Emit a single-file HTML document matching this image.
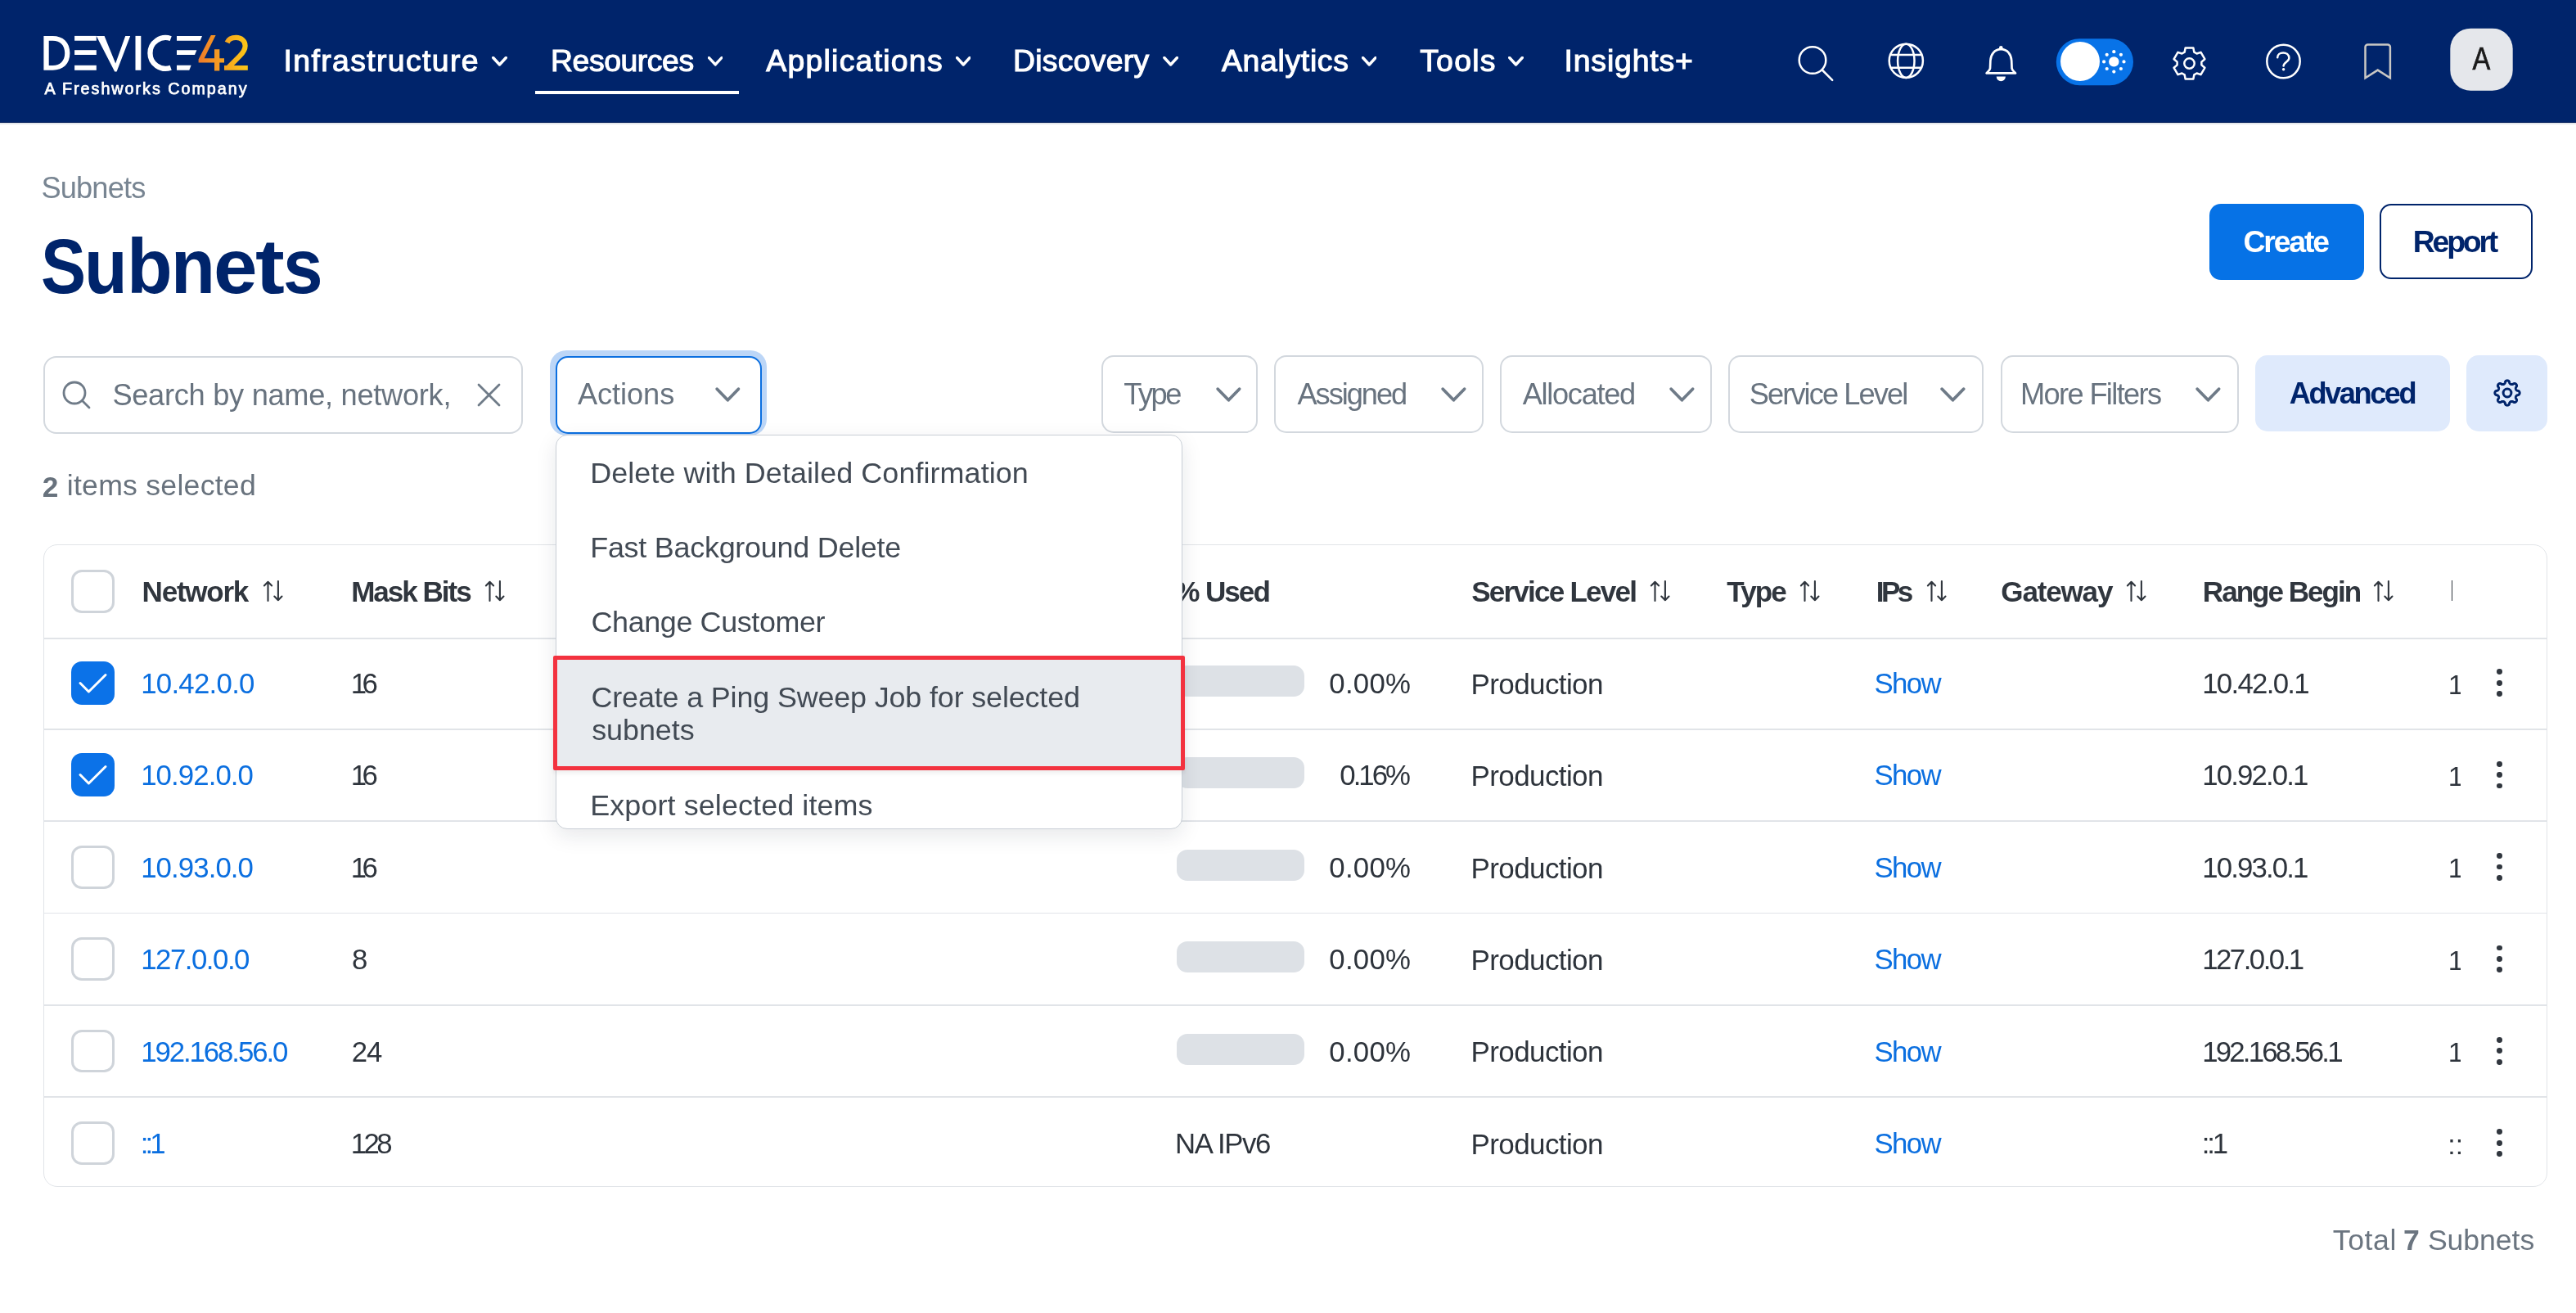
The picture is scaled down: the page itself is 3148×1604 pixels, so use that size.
<!DOCTYPE html><html><head><meta charset="utf-8"><style>
html,body{margin:0;padding:0;width:3148px;height:1604px;overflow:hidden;background:#fff;position:relative}
.t{position:absolute;line-height:1;white-space:nowrap;font-family:"Liberation Sans",sans-serif}
</style></head><body><div id="root" style="position:absolute;left:0;top:0;width:3148px;height:1604px;will-change:transform">
<div style="position:absolute;left:0;top:0;width:3148px;height:150px;background:#00246b"></div>
<div style="position:absolute;left:0;top:149px;width:3148px;height:1px;background:#001a58"></div>
<div style="position:absolute;left:0;top:150px;width:3148px;height:2px;background:#e3e7eb"></div>
<svg style="position:absolute;left:0;top:0" width="320" height="130" viewBox="0 0 320 130">
<defs><linearGradient id="g42" x1="242" y1="0" x2="303" y2="0" gradientUnits="userSpaceOnUse"><stop offset="0" stop-color="#ef7a2a"/><stop offset="1" stop-color="#fdc816"/></linearGradient></defs>
<g fill="#fff">
<path fill-rule="evenodd" d="M53.4,43.9 H64.5 C77,43.9 85.4,51.5 85.4,64.85 C85.4,78.2 77,85.8 64.5,85.8 H53.4 Z M59.7,49.7 H64.5 C73.5,49.7 79.2,55 79.2,64.85 C79.2,74.7 73.5,80 64.5,80 H59.7 Z"/>
<rect x="91.1" y="43.9" width="26.7" height="5.8"/><rect x="91.1" y="61.2" width="26.7" height="5.8"/><rect x="91.1" y="79.8" width="26.7" height="6"/>
<polygon points="117.8,43.9 127.6,43.9 141.2,77.5 153.2,43.9 159.2,43.9 142.6,87.4 140.2,87.4"/>
<rect x="165.5" y="43.9" width="6.8" height="41.9"/>
<polygon points="216,43.9 247,43.9 244.6,49.7 216,49.7"/><polygon points="216,61.2 240.4,61.2 238,67 216,67"/><polygon points="216,79.8 233.6,79.8 231.3,85.8 216,85.8"/>
</g>
<path d="M208.7,47.1 A18.9,18.9 0 1 0 208.7,82.7" fill="none" stroke="#fff" stroke-width="6.3"/>
<g fill="url(#g42)">
<polygon points="257.8,42.9 263.6,42.9 249.6,71.2 262,71.2 262,60.2 268.3,60.2 268.3,71.2 274,71.2 274,76.4 268.3,76.4 268.3,86.4 262,86.4 262,76.4 242.6,76.4 242.6,72.5"/>
<path d="M277.6,52 C279.4,47.5 283.2,45.9 288.5,45.9 C295,45.9 299.6,50 299.6,56 C299.6,61 297.2,64.2 293,68.4 L278.5,83" fill="none" stroke="url(#g42)" stroke-width="6.2"/>
<rect x="274" y="80" width="28.8" height="5.8"/>
</g>
</svg>
<div class="t" style="left:54.5px;top:98.5px;font-size:19.71px;color:#fff;letter-spacing:2.00px;-webkit-text-stroke:0.75px #fff;">A Freshworks Company</div>
<div class="t" style="left:346.5px;top:56.4px;font-size:37.39px;color:#fff;letter-spacing:1.37px;-webkit-text-stroke:1.1px #fff;">Infrastructure</div>
<svg style="position:absolute;left:601.0px;top:69.4px" width="19.0" height="12.5" viewBox="0 0 18.6 12.5"><path d="M1.5,1.5 L9.3,10 L17.1,1.5" fill="none" stroke="#fff" stroke-width="3.4" stroke-linecap="round" stroke-linejoin="round"/></svg>
<div class="t" style="left:673.0px;top:56.4px;font-size:37.39px;color:#fff;letter-spacing:-0.44px;-webkit-text-stroke:1.1px #fff;">Resources</div>
<svg style="position:absolute;left:864.6px;top:69.4px" width="18.4" height="12.5" viewBox="0 0 18.6 12.5"><path d="M1.5,1.5 L9.3,10 L17.1,1.5" fill="none" stroke="#fff" stroke-width="3.4" stroke-linecap="round" stroke-linejoin="round"/></svg>
<div class="t" style="left:936.3px;top:56.4px;font-size:37.39px;color:#fff;letter-spacing:1.25px;-webkit-text-stroke:1.1px #fff;">Applications</div>
<svg style="position:absolute;left:1167.8px;top:69.4px" width="18.6" height="12.5" viewBox="0 0 18.6 12.5"><path d="M1.5,1.5 L9.3,10 L17.1,1.5" fill="none" stroke="#fff" stroke-width="3.4" stroke-linecap="round" stroke-linejoin="round"/></svg>
<div class="t" style="left:1238.0px;top:56.4px;font-size:37.39px;color:#fff;letter-spacing:0.25px;-webkit-text-stroke:1.1px #fff;">Discovery</div>
<svg style="position:absolute;left:1420.7px;top:69.4px" width="19.3" height="12.5" viewBox="0 0 18.6 12.5"><path d="M1.5,1.5 L9.3,10 L17.1,1.5" fill="none" stroke="#fff" stroke-width="3.4" stroke-linecap="round" stroke-linejoin="round"/></svg>
<div class="t" style="left:1493.0px;top:56.4px;font-size:37.39px;color:#fff;letter-spacing:0.67px;-webkit-text-stroke:1.1px #fff;">Analytics</div>
<svg style="position:absolute;left:1663.9px;top:69.4px" width="18.6" height="12.5" viewBox="0 0 18.6 12.5"><path d="M1.5,1.5 L9.3,10 L17.1,1.5" fill="none" stroke="#fff" stroke-width="3.4" stroke-linecap="round" stroke-linejoin="round"/></svg>
<div class="t" style="left:1735.2px;top:56.4px;font-size:37.39px;color:#fff;letter-spacing:1.25px;-webkit-text-stroke:1.1px #fff;">Tools</div>
<svg style="position:absolute;left:1843.0px;top:69.4px" width="19.0" height="12.5" viewBox="0 0 18.6 12.5"><path d="M1.5,1.5 L9.3,10 L17.1,1.5" fill="none" stroke="#fff" stroke-width="3.4" stroke-linecap="round" stroke-linejoin="round"/></svg>
<div class="t" style="left:1911.5px;top:56.4px;font-size:37.39px;color:#fff;letter-spacing:0.84px;-webkit-text-stroke:1.1px #fff;">Insights+</div>
<div style="position:absolute;left:654px;top:111px;width:249px;height:4px;background:#fff"></div>
<svg style="position:absolute;left:2150px;top:0" width="998" height="150" viewBox="2150 0 998 150">
<g fill="none" stroke="#fff" stroke-width="2.5" stroke-linecap="round" stroke-linejoin="round">
<circle cx="2215" cy="73.5" r="16.3"/><path d="M2226.8,85.5 L2239.2,97.8"/>
<circle cx="2329.3" cy="74.3" r="20.6"/><ellipse cx="2329.3" cy="74.3" rx="10.2" ry="20.6"/><path d="M2311,67 H2347.6 M2311,82.7 H2347.6"/>
<path d="M2445.3,60.2 C2437.3,60.2 2432.8,66.5 2432.4,74 L2432,83.5 C2431.6,86.5 2428.5,88 2427.6,89.4 L2463,89.4 C2462.1,88 2459,86.5 2458.6,83.5 L2458.2,74 C2457.8,66.5 2453.3,60.2 2445.3,60.2 Z" stroke-width="2.7"/>
<circle cx="2790.5" cy="75" r="20.2"/>
<path d="M2893.5,54.4 H2917.9 A3,3 0 0 1 2920.9,57.4 V95.2 L2905.7,85.6 L2890.5,95.2 V57.4 A3,3 0 0 1 2893.5,54.4 Z" stroke="#c9c7c4" stroke-linecap="butt" stroke-linejoin="miter"/>
</g>
<g fill="#fff">
<rect x="2443" y="56" width="4.6" height="5" rx="2.3"/><path d="M2439.7,93.6 H2450.9 A5.6,5.6 0 0 1 2439.7,93.6 Z"/>
</g>
<path d="M2783.2,70.2 C2783.2,66.6 2786.4,64.6 2790.2,64.6 C2794.3,64.6 2797.4,67.1 2797.4,70.8 C2797.4,75.2 2790.6,76.3 2790.6,80.6" fill="none" stroke="#fff" stroke-width="2.5" stroke-linecap="round"/>
<circle cx="2790.6" cy="84.7" r="1.75" fill="#fff"/>
<rect x="2512.8" y="47.2" width="94.2" height="57" rx="28.5" fill="#0873e8"/>
<circle cx="2542" cy="75" r="24" fill="#fff"/>
<circle cx="2583.3" cy="75.4" r="6.2" fill="#fff"/>
<g fill="#fff"><circle cx="2583.3" cy="63.2" r="2.1"/><circle cx="2583.3" cy="87.6" r="2.1"/><circle cx="2571.1" cy="75.4" r="2.1"/><circle cx="2595.5" cy="75.4" r="2.1"/>
<circle cx="2574.7" cy="66.8" r="2.1"/><circle cx="2591.9" cy="66.8" r="2.1"/><circle cx="2574.7" cy="84" r="2.1"/><circle cx="2591.9" cy="84" r="2.1"/></g>
<rect x="2994.3" y="34.7" width="76.4" height="76" rx="25" fill="#e5e7eb"/>
</svg>
<svg style="position:absolute;left:2600px;top:0" width="150" height="150" viewBox="2600 0 150 150"><path d="M2670.65,58.51 L2680.35,58.51 L2681.34,63.68 L2684.54,65.53 L2689.52,63.81 L2694.37,72.20 L2690.39,75.65 L2690.39,79.35 L2694.37,82.80 L2689.52,91.19 L2684.54,89.47 L2681.34,91.32 L2680.35,96.49 L2670.65,96.49 L2669.66,91.32 L2666.46,89.47 L2661.48,91.19 L2656.63,82.80 L2660.61,79.35 L2660.61,75.65 L2656.63,72.20 L2661.48,63.81 L2666.46,65.53 L2669.66,63.68 Z" fill="none" stroke="#fff" stroke-width="2.5" stroke-linejoin="round"/><circle cx="2675.5" cy="77.5" r="6.2" fill="none" stroke="#fff" stroke-width="2.5"/></svg>
<div class="t" style="left:3021.2px;top:52.6px;font-size:38.84px;color:#1a1a1a;-webkit-text-stroke:0.7px #1a1a1a;transform:scaleX(0.84);transform-origin:3px 0;">A</div>
<div class="t" style="left:50.4px;top:212.2px;font-size:36.23px;color:#788592;letter-spacing:-0.82px;">Subnets</div>
<div class="t" style="left:49.7px;top:278.1px;font-size:94.93px;color:#00246b;transform:scaleX(0.870);transform-origin:0 0;font-weight:700;">S</div><div class="t" style="left:103.4px;top:278.1px;font-size:94.93px;color:#00246b;transform:scaleX(0.907);transform-origin:0 0;font-weight:700;">u</div><div class="t" style="left:155.3px;top:278.1px;font-size:94.93px;color:#00246b;transform:scaleX(0.960);transform-origin:0 0;font-weight:700;">b</div><div class="t" style="left:209.4px;top:278.1px;font-size:94.93px;color:#00246b;transform:scaleX(0.930);transform-origin:0 0;font-weight:700;">n</div><div class="t" style="left:261.2px;top:278.1px;font-size:94.93px;color:#00246b;transform:scaleX(1.014);transform-origin:0 0;font-weight:700;">e</div><div class="t" style="left:311.5px;top:278.1px;font-size:94.93px;color:#00246b;transform:scaleX(1.135);transform-origin:0 0;font-weight:700;">t</div><div class="t" style="left:346.0px;top:278.1px;font-size:94.93px;color:#00246b;transform:scaleX(0.920);transform-origin:0 0;font-weight:700;">s</div>
<div style="position:absolute;left:2700px;top:249.1px;width:189.2px;height:92.6px;border-radius:14px;background:#0672e6"></div>
<div class="t" style="left:2741.5px;top:276.8px;font-size:37.39px;color:#fff;font-weight:700;letter-spacing:-2.16px;">Create</div>
<div style="position:absolute;left:2908.3px;top:249.4px;width:186.4px;height:92px;border-radius:14px;box-sizing:border-box;border:2.5px solid #00246b;background:#fff"></div>
<div class="t" style="left:2948.8px;top:276.8px;font-size:37.39px;color:#00246b;font-weight:700;letter-spacing:-3.21px;">Report</div>
<div style="position:absolute;left:53px;top:434.5px;width:586px;height:95.5px;border-radius:16px;box-sizing:border-box;border:2.5px solid #d3d8de;background:#fff"></div>
<svg style="position:absolute;left:70px;top:458px" width="50" height="50" viewBox="70 458 50 50"><circle cx="91" cy="480" r="13" fill="none" stroke="#6f7b88" stroke-width="2.8"/><path d="M100.5,489.5 L109,498" stroke="#6f7b88" stroke-width="2.8" stroke-linecap="round"/></svg>
<div class="t" style="left:137.4px;top:464.7px;font-size:36.23px;color:#68737f;letter-spacing:-0.29px;">Search by name, network,</div>
<svg style="position:absolute;left:580px;top:465px" width="35" height="35" viewBox="580 465 35 35"><path d="M585,470 L610,495 M610,470 L585,495" stroke="#6f7b88" stroke-width="2.8" stroke-linecap="round"/></svg>
<div style="position:absolute;left:671.6px;top:427.8px;width:265px;height:104px;border-radius:20px;background:#bcd6f7"></div>
<div style="position:absolute;left:678.8px;top:434.5px;width:252px;height:95px;border-radius:15px;box-sizing:border-box;border:2.5px solid #0b6fe0;background:#fff"></div>
<div class="t" style="left:706.0px;top:463.7px;font-size:36.23px;color:#68737f;letter-spacing:-0.08px;">Actions</div>
<svg style="position:absolute;left:871.5px;top:471.0px" width="34.6" height="22.0" viewBox="871.5 471.0 34.6 22.0"><path d="M875.7,475.2 L888.8,488.8 L901.9,475.2" fill="none" stroke="#6f7b88" stroke-width="3.8" stroke-linecap="round" stroke-linejoin="round"/></svg>
<div style="position:absolute;left:1346px;top:434.2px;width:191px;height:95.3px;border-radius:15px;box-sizing:border-box;border:2.5px solid #d3d8de;background:#fff"></div>
<div class="t" style="left:1373.2px;top:464.0px;font-size:36.23px;color:#68737f;letter-spacing:-2.42px;">Type</div>
<svg style="position:absolute;left:1484.0px;top:471.0px" width="34.8" height="22.0" viewBox="1484.0 471.0 34.8 22.0"><path d="M1488.2,475.2 L1501.4,488.8 L1514.6,475.2" fill="none" stroke="#6f7b88" stroke-width="3.8" stroke-linecap="round" stroke-linejoin="round"/></svg>
<div style="position:absolute;left:1557px;top:434.2px;width:256px;height:95.3px;border-radius:15px;box-sizing:border-box;border:2.5px solid #d3d8de;background:#fff"></div>
<div class="t" style="left:1585.5px;top:464.0px;font-size:36.23px;color:#68737f;letter-spacing:-2.04px;">Assigned</div>
<svg style="position:absolute;left:1759.0px;top:471.0px" width="34.8" height="22.0" viewBox="1759.0 471.0 34.8 22.0"><path d="M1763.2,475.2 L1776.4,488.8 L1789.6,475.2" fill="none" stroke="#6f7b88" stroke-width="3.8" stroke-linecap="round" stroke-linejoin="round"/></svg>
<div style="position:absolute;left:1833px;top:434.2px;width:259px;height:95.3px;border-radius:15px;box-sizing:border-box;border:2.5px solid #d3d8de;background:#fff"></div>
<div class="t" style="left:1860.7px;top:464.0px;font-size:36.23px;color:#68737f;letter-spacing:-1.31px;">Allocated</div>
<svg style="position:absolute;left:2037.6px;top:471.0px" width="34.8" height="22.0" viewBox="2037.6 471.0 34.8 22.0"><path d="M2041.8,475.2 L2055.0,488.8 L2068.2,475.2" fill="none" stroke="#6f7b88" stroke-width="3.8" stroke-linecap="round" stroke-linejoin="round"/></svg>
<div style="position:absolute;left:2112px;top:434.2px;width:312px;height:95.3px;border-radius:15px;box-sizing:border-box;border:2.5px solid #d3d8de;background:#fff"></div>
<div class="t" style="left:2137.8px;top:464.0px;font-size:36.23px;color:#68737f;letter-spacing:-1.92px;">Service Level</div>
<svg style="position:absolute;left:2369.0px;top:471.0px" width="34.8" height="22.0" viewBox="2369.0 471.0 34.8 22.0"><path d="M2373.2,475.2 L2386.4,488.8 L2399.6,475.2" fill="none" stroke="#6f7b88" stroke-width="3.8" stroke-linecap="round" stroke-linejoin="round"/></svg>
<div style="position:absolute;left:2445px;top:434.2px;width:291px;height:95.3px;border-radius:15px;box-sizing:border-box;border:2.5px solid #d3d8de;background:#fff"></div>
<div class="t" style="left:2469.0px;top:464.0px;font-size:36.23px;color:#68737f;letter-spacing:-1.64px;">More Filters</div>
<svg style="position:absolute;left:2680.6px;top:471.0px" width="34.8" height="22.0" viewBox="2680.6 471.0 34.8 22.0"><path d="M2684.8,475.2 L2698.0,488.8 L2711.2,475.2" fill="none" stroke="#6f7b88" stroke-width="3.8" stroke-linecap="round" stroke-linejoin="round"/></svg>
<div style="position:absolute;left:2756px;top:434.2px;width:237.5px;height:93.2px;border-radius:15px;background:#dfeafc"></div>
<div class="t" style="left:2797.7px;top:463.0px;font-size:36.23px;color:#00246b;font-weight:700;letter-spacing:-2.45px;">Advanced</div>
<div style="position:absolute;left:3014px;top:434.2px;width:99px;height:93.2px;border-radius:15px;background:#dfeafc"></div>
<svg style="position:absolute;left:3040px;top:456px" width="48" height="49" viewBox="3040 456 48 49"><path d="M3079.15,480.00 L3079.12,480.40 L3079.04,480.79 L3078.90,481.17 L3078.70,481.55 L3078.44,481.90 L3078.09,482.23 L3077.60,482.52 L3076.49,482.65 L3075.99,482.88 L3075.63,483.12 L3075.33,483.36 L3075.08,483.60 L3074.88,483.85 L3074.71,484.11 L3074.58,484.38 L3074.48,484.67 L3074.42,484.97 L3074.38,485.29 L3074.38,485.64 L3074.42,486.02 L3074.51,486.44 L3074.71,486.95 L3075.40,487.84 L3075.54,488.39 L3075.55,488.87 L3075.49,489.30 L3075.37,489.71 L3075.19,490.08 L3074.97,490.41 L3074.71,490.71 L3074.41,490.97 L3074.08,491.19 L3073.71,491.37 L3073.30,491.49 L3072.87,491.55 L3072.39,491.54 L3071.84,491.40 L3070.95,490.71 L3070.44,490.51 L3070.02,490.42 L3069.64,490.38 L3069.29,490.38 L3068.97,490.42 L3068.67,490.48 L3068.38,490.58 L3068.11,490.71 L3067.85,490.88 L3067.60,491.08 L3067.36,491.33 L3067.12,491.63 L3066.88,491.99 L3066.65,492.49 L3066.52,493.60 L3066.23,494.09 L3065.90,494.44 L3065.55,494.70 L3065.17,494.90 L3064.79,495.04 L3064.40,495.12 L3064.00,495.15 L3063.60,495.12 L3063.21,495.04 L3062.83,494.90 L3062.45,494.70 L3062.10,494.44 L3061.77,494.09 L3061.48,493.60 L3061.35,492.49 L3061.12,491.99 L3060.88,491.63 L3060.64,491.33 L3060.40,491.08 L3060.15,490.88 L3059.89,490.71 L3059.62,490.58 L3059.33,490.48 L3059.03,490.42 L3058.71,490.38 L3058.36,490.38 L3057.98,490.42 L3057.56,490.51 L3057.05,490.71 L3056.16,491.40 L3055.61,491.54 L3055.13,491.55 L3054.70,491.49 L3054.29,491.37 L3053.92,491.19 L3053.59,490.97 L3053.29,490.71 L3053.03,490.41 L3052.81,490.08 L3052.63,489.71 L3052.51,489.30 L3052.45,488.87 L3052.46,488.39 L3052.60,487.84 L3053.29,486.95 L3053.49,486.44 L3053.58,486.02 L3053.62,485.64 L3053.62,485.29 L3053.58,484.97 L3053.52,484.67 L3053.42,484.38 L3053.29,484.11 L3053.12,483.85 L3052.92,483.60 L3052.67,483.36 L3052.37,483.12 L3052.01,482.88 L3051.51,482.65 L3050.40,482.52 L3049.91,482.23 L3049.56,481.90 L3049.30,481.55 L3049.10,481.17 L3048.96,480.79 L3048.88,480.40 L3048.85,480.00 L3048.88,479.60 L3048.96,479.21 L3049.10,478.83 L3049.30,478.45 L3049.56,478.10 L3049.91,477.77 L3050.40,477.48 L3051.51,477.35 L3052.01,477.12 L3052.37,476.88 L3052.67,476.64 L3052.92,476.40 L3053.12,476.15 L3053.29,475.89 L3053.42,475.62 L3053.52,475.33 L3053.58,475.03 L3053.62,474.71 L3053.62,474.36 L3053.58,473.98 L3053.49,473.56 L3053.29,473.05 L3052.60,472.16 L3052.46,471.61 L3052.45,471.13 L3052.51,470.70 L3052.63,470.29 L3052.81,469.92 L3053.03,469.59 L3053.29,469.29 L3053.59,469.03 L3053.92,468.81 L3054.29,468.63 L3054.70,468.51 L3055.13,468.45 L3055.61,468.46 L3056.16,468.60 L3057.05,469.29 L3057.56,469.49 L3057.98,469.58 L3058.36,469.62 L3058.71,469.62 L3059.03,469.58 L3059.33,469.52 L3059.62,469.42 L3059.89,469.29 L3060.15,469.12 L3060.40,468.92 L3060.64,468.67 L3060.88,468.37 L3061.12,468.01 L3061.35,467.51 L3061.48,466.40 L3061.77,465.91 L3062.10,465.56 L3062.45,465.30 L3062.83,465.10 L3063.21,464.96 L3063.60,464.88 L3064.00,464.85 L3064.40,464.88 L3064.79,464.96 L3065.17,465.10 L3065.55,465.30 L3065.90,465.56 L3066.23,465.91 L3066.52,466.40 L3066.65,467.51 L3066.88,468.01 L3067.12,468.37 L3067.36,468.67 L3067.60,468.92 L3067.85,469.12 L3068.11,469.29 L3068.38,469.42 L3068.67,469.52 L3068.97,469.58 L3069.29,469.62 L3069.64,469.62 L3070.02,469.58 L3070.44,469.49 L3070.95,469.29 L3071.84,468.60 L3072.39,468.46 L3072.87,468.45 L3073.30,468.51 L3073.71,468.63 L3074.08,468.81 L3074.41,469.03 L3074.71,469.29 L3074.97,469.59 L3075.19,469.92 L3075.37,470.29 L3075.49,470.70 L3075.55,471.13 L3075.54,471.61 L3075.40,472.16 L3074.71,473.05 L3074.51,473.56 L3074.42,473.98 L3074.38,474.36 L3074.38,474.71 L3074.42,475.03 L3074.48,475.33 L3074.58,475.62 L3074.71,475.89 L3074.88,476.15 L3075.08,476.40 L3075.33,476.64 L3075.63,476.88 L3075.99,477.12 L3076.49,477.35 L3077.60,477.48 L3078.09,477.77 L3078.44,478.10 L3078.70,478.45 L3078.90,478.83 L3079.04,479.21 L3079.12,479.60 Z" fill="none" stroke="#00246b" stroke-width="3" stroke-linejoin="round"/><circle cx="3064" cy="480" r="4.9" fill="none" stroke="#00246b" stroke-width="3"/></svg>
<div class="t" style="left:51.8px;top:576.6px;font-size:35.22px;color:#68727d;font-weight:700;">2</div>
<div class="t" style="left:81.8px;top:576.2px;font-size:35.65px;color:#68727d;letter-spacing:0.24px;">items selected</div>
<div style="position:absolute;left:52.5px;top:665px;width:3060.5px;height:785px;box-sizing:border-box;border:1.5px solid #e1e4e8;border-radius:17px;background:#fff"></div>
<div style="position:absolute;left:53.5px;top:779.2px;width:3058.5px;height:1.6px;background:#e1e4e8"></div>
<div style="position:absolute;left:53.5px;top:890.3px;width:3058.5px;height:1.6px;background:#e1e4e8"></div>
<div style="position:absolute;left:53.5px;top:1002.3px;width:3058.5px;height:1.6px;background:#e1e4e8"></div>
<div style="position:absolute;left:53.5px;top:1114.9px;width:3058.5px;height:1.6px;background:#e1e4e8"></div>
<div style="position:absolute;left:53.5px;top:1227.1px;width:3058.5px;height:1.6px;background:#e1e4e8"></div>
<div style="position:absolute;left:53.5px;top:1339.4px;width:3058.5px;height:1.6px;background:#e1e4e8"></div>
<div class="t" style="left:173.6px;top:704.7px;font-size:35.07px;color:#30363e;font-weight:700;letter-spacing:-1.26px;">Network</div>
<svg style="position:absolute;left:319.8px;top:708px" width="28" height="28" viewBox="319.8 708 28 28"><path d="M327.3,734 V710.8 M322.7,715.4 L327.3,710.8 L331.9,715.4 M339.7,710 V733.2 M335.1,728.6 L339.7,733.2 L344.3,728.6" fill="none" stroke="#30363e" stroke-width="2.1" stroke-linecap="round" stroke-linejoin="round"/></svg>
<div class="t" style="left:429.2px;top:704.7px;font-size:35.07px;color:#30363e;font-weight:700;letter-spacing:-2.03px;">Mask Bits</div>
<svg style="position:absolute;left:590.6px;top:708px" width="28" height="28" viewBox="590.6 708 28 28"><path d="M598.1,734 V710.8 M593.5,715.4 L598.1,710.8 L602.7,715.4 M610.5,710 V733.2 M605.9,728.6 L610.5,733.2 L615.1,728.6" fill="none" stroke="#30363e" stroke-width="2.1" stroke-linecap="round" stroke-linejoin="round"/></svg>
<div class="t" style="left:1435.2px;top:704.7px;font-size:35.07px;color:#30363e;font-weight:700;">%</div>
<div class="t" style="left:1473.0px;top:704.7px;font-size:35.07px;color:#30363e;font-weight:700;letter-spacing:-1.98px;">Used</div>
<div class="t" style="left:1798.2px;top:704.7px;font-size:35.07px;color:#30363e;font-weight:700;letter-spacing:-1.79px;">Service Level</div>
<svg style="position:absolute;left:2014.5px;top:708px" width="28" height="28" viewBox="2014.5 708 28 28"><path d="M2022.0,734 V710.8 M2017.4,715.4 L2022.0,710.8 L2026.6,715.4 M2034.4,710 V733.2 M2029.8,728.6 L2034.4,733.2 L2039.0,728.6" fill="none" stroke="#30363e" stroke-width="2.1" stroke-linecap="round" stroke-linejoin="round"/></svg>
<div class="t" style="left:2110.3px;top:704.7px;font-size:35.07px;color:#30363e;font-weight:700;letter-spacing:-1.90px;">Type</div>
<svg style="position:absolute;left:2197.5px;top:708px" width="28" height="28" viewBox="2197.5 708 28 28"><path d="M2205.0,734 V710.8 M2200.4,715.4 L2205.0,710.8 L2209.6,715.4 M2217.4,710 V733.2 M2212.8,728.6 L2217.4,733.2 L2222.0,728.6" fill="none" stroke="#30363e" stroke-width="2.1" stroke-linecap="round" stroke-linejoin="round"/></svg>
<div class="t" style="left:2292.8px;top:704.7px;font-size:35.07px;color:#30363e;font-weight:700;letter-spacing:-3.53px;">IPs</div>
<svg style="position:absolute;left:2352.5px;top:708px" width="28" height="28" viewBox="2352.5 708 28 28"><path d="M2360.0,734 V710.8 M2355.4,715.4 L2360.0,710.8 L2364.6,715.4 M2372.4,710 V733.2 M2367.8,728.6 L2372.4,733.2 L2377.0,728.6" fill="none" stroke="#30363e" stroke-width="2.1" stroke-linecap="round" stroke-linejoin="round"/></svg>
<div class="t" style="left:2445.3px;top:704.7px;font-size:35.07px;color:#30363e;font-weight:700;letter-spacing:-1.18px;">Gateway</div>
<svg style="position:absolute;left:2597.0px;top:708px" width="28" height="28" viewBox="2597.0 708 28 28"><path d="M2604.5,734 V710.8 M2599.9,715.4 L2604.5,710.8 L2609.1,715.4 M2616.9,710 V733.2 M2612.3,728.6 L2616.9,733.2 L2621.5,728.6" fill="none" stroke="#30363e" stroke-width="2.1" stroke-linecap="round" stroke-linejoin="round"/></svg>
<div class="t" style="left:2691.8px;top:704.7px;font-size:35.07px;color:#30363e;font-weight:700;letter-spacing:-1.99px;">Range Begin</div>
<svg style="position:absolute;left:2899.0px;top:708px" width="28" height="28" viewBox="2899.0 708 28 28"><path d="M2906.5,734 V710.8 M2901.9,715.4 L2906.5,710.8 L2911.1,715.4 M2918.9,710 V733.2 M2914.3,728.6 L2918.9,733.2 L2923.5,728.6" fill="none" stroke="#30363e" stroke-width="2.1" stroke-linecap="round" stroke-linejoin="round"/></svg>
<div style="position:absolute;left:2995.5px;top:709.4px;width:1.8px;height:24.3px;background:#30363e"></div>
<div style="position:absolute;left:87.2px;top:696.0px;width:52.8px;height:52.8px;border-radius:13px;box-sizing:border-box;border:3px solid #cfd4da;background:#fff"></div>
<div style="position:absolute;left:87.2px;top:808.0px;width:52.8px;height:52.8px;border-radius:13px;background:#0b72e8"></div><svg style="position:absolute;left:87.2px;top:808.0px" width="53" height="53" viewBox="0 0 53 53"><path d="M11,26.5 L21.4,37 L42,16.5" fill="none" stroke="#fff" stroke-width="3" stroke-linecap="round" stroke-linejoin="round"/></svg>
<div class="t" style="left:172.2px;top:817.9px;font-size:34.78px;color:#0b6fe0;letter-spacing:-0.72px;">10.42.0.0</div>
<div class="t" style="left:428.8px;top:817.9px;font-size:34.78px;color:#2e343c;letter-spacing:-5.75px;">16</div>
<div style="position:absolute;left:1438px;top:813.0px;width:156px;height:38px;border-radius:13px;background:#dde1e6"></div>
<div class="t" style="left:1624.3px;top:817.9px;font-size:34.78px;color:#2e343c;letter-spacing:0.29px;">0.00%</div>
<div class="t" style="left:1797.5px;top:817.7px;font-size:35.07px;color:#2e343c;letter-spacing:-0.63px;">Production</div>
<div class="t" style="left:2290.5px;top:817.9px;font-size:34.78px;color:#0b6fe0;letter-spacing:-1.60px;">Show</div>
<div class="t" style="left:2691.2px;top:817.9px;font-size:34.78px;color:#2e343c;letter-spacing:-1.69px;">10.42.0.1</div>
<div style="position:absolute;left:2990px;top:807.0px;width:17px;height:50px;overflow:hidden"><div class="t" style="left:1.8px;top:11.6px;font-size:34.06px;color:#2e343c;">1</div></div>
<div style="position:absolute;left:3051.3px;top:817.4px;width:6.8px;height:6.8px;border-radius:50%;background:#30363e"></div>
<div style="position:absolute;left:3051.3px;top:830.8px;width:6.8px;height:6.8px;border-radius:50%;background:#30363e"></div>
<div style="position:absolute;left:3051.3px;top:844.2px;width:6.8px;height:6.8px;border-radius:50%;background:#30363e"></div>
<div style="position:absolute;left:87.2px;top:920.4px;width:52.8px;height:52.8px;border-radius:13px;background:#0b72e8"></div><svg style="position:absolute;left:87.2px;top:920.4px" width="53" height="53" viewBox="0 0 53 53"><path d="M11,26.5 L21.4,37 L42,16.5" fill="none" stroke="#fff" stroke-width="3" stroke-linecap="round" stroke-linejoin="round"/></svg>
<div class="t" style="left:172.2px;top:930.3px;font-size:34.78px;color:#0b6fe0;letter-spacing:-0.91px;">10.92.0.0</div>
<div class="t" style="left:428.8px;top:930.3px;font-size:34.78px;color:#2e343c;letter-spacing:-5.75px;">16</div>
<div style="position:absolute;left:1438px;top:925.4px;width:156px;height:38px;border-radius:13px;background:#dde1e6"></div>
<div class="t" style="left:1637.3px;top:930.3px;font-size:34.78px;color:#2e343c;letter-spacing:-2.96px;">0.16%</div>
<div class="t" style="left:1797.5px;top:930.1px;font-size:35.07px;color:#2e343c;letter-spacing:-0.63px;">Production</div>
<div class="t" style="left:2290.5px;top:930.3px;font-size:34.78px;color:#0b6fe0;letter-spacing:-1.60px;">Show</div>
<div class="t" style="left:2691.2px;top:930.3px;font-size:34.78px;color:#2e343c;letter-spacing:-1.86px;">10.92.0.1</div>
<div style="position:absolute;left:2990px;top:919.4px;width:17px;height:50px;overflow:hidden"><div class="t" style="left:1.8px;top:11.6px;font-size:34.06px;color:#2e343c;">1</div></div>
<div style="position:absolute;left:3051.3px;top:929.8px;width:6.8px;height:6.8px;border-radius:50%;background:#30363e"></div>
<div style="position:absolute;left:3051.3px;top:943.2px;width:6.8px;height:6.8px;border-radius:50%;background:#30363e"></div>
<div style="position:absolute;left:3051.3px;top:956.6px;width:6.8px;height:6.8px;border-radius:50%;background:#30363e"></div>
<div style="position:absolute;left:87.2px;top:1032.8px;width:52.8px;height:52.8px;border-radius:13px;box-sizing:border-box;border:3px solid #cfd4da;background:#fff"></div>
<div class="t" style="left:172.2px;top:1042.7px;font-size:34.78px;color:#0b6fe0;letter-spacing:-0.91px;">10.93.0.0</div>
<div class="t" style="left:428.8px;top:1042.7px;font-size:34.78px;color:#2e343c;letter-spacing:-5.75px;">16</div>
<div style="position:absolute;left:1438px;top:1037.8px;width:156px;height:38px;border-radius:13px;background:#dde1e6"></div>
<div class="t" style="left:1624.3px;top:1042.7px;font-size:34.78px;color:#2e343c;letter-spacing:0.29px;">0.00%</div>
<div class="t" style="left:1797.5px;top:1042.5px;font-size:35.07px;color:#2e343c;letter-spacing:-0.63px;">Production</div>
<div class="t" style="left:2290.5px;top:1042.7px;font-size:34.78px;color:#0b6fe0;letter-spacing:-1.60px;">Show</div>
<div class="t" style="left:2691.2px;top:1042.7px;font-size:34.78px;color:#2e343c;letter-spacing:-1.86px;">10.93.0.1</div>
<div style="position:absolute;left:2990px;top:1031.8px;width:17px;height:50px;overflow:hidden"><div class="t" style="left:1.8px;top:11.6px;font-size:34.06px;color:#2e343c;">1</div></div>
<div style="position:absolute;left:3051.3px;top:1042.2px;width:6.8px;height:6.8px;border-radius:50%;background:#30363e"></div>
<div style="position:absolute;left:3051.3px;top:1055.6px;width:6.8px;height:6.8px;border-radius:50%;background:#30363e"></div>
<div style="position:absolute;left:3051.3px;top:1069.0px;width:6.8px;height:6.8px;border-radius:50%;background:#30363e"></div>
<div style="position:absolute;left:87.2px;top:1145.2px;width:52.8px;height:52.8px;border-radius:13px;box-sizing:border-box;border:3px solid #cfd4da;background:#fff"></div>
<div class="t" style="left:172.2px;top:1155.1px;font-size:34.78px;color:#0b6fe0;letter-spacing:-1.47px;">127.0.0.0</div>
<div class="t" style="left:430.0px;top:1155.1px;font-size:34.78px;color:#2e343c;">8</div>
<div style="position:absolute;left:1438px;top:1150.2px;width:156px;height:38px;border-radius:13px;background:#dde1e6"></div>
<div class="t" style="left:1624.3px;top:1155.1px;font-size:34.78px;color:#2e343c;letter-spacing:0.29px;">0.00%</div>
<div class="t" style="left:1797.5px;top:1154.9px;font-size:35.07px;color:#2e343c;letter-spacing:-0.63px;">Production</div>
<div class="t" style="left:2290.5px;top:1155.1px;font-size:34.78px;color:#0b6fe0;letter-spacing:-1.60px;">Show</div>
<div class="t" style="left:2691.2px;top:1155.1px;font-size:34.78px;color:#2e343c;letter-spacing:-2.50px;">127.0.0.1</div>
<div style="position:absolute;left:2990px;top:1144.2px;width:17px;height:50px;overflow:hidden"><div class="t" style="left:1.8px;top:11.6px;font-size:34.06px;color:#2e343c;">1</div></div>
<div style="position:absolute;left:3051.3px;top:1154.6px;width:6.8px;height:6.8px;border-radius:50%;background:#30363e"></div>
<div style="position:absolute;left:3051.3px;top:1168.0px;width:6.8px;height:6.8px;border-radius:50%;background:#30363e"></div>
<div style="position:absolute;left:3051.3px;top:1181.4px;width:6.8px;height:6.8px;border-radius:50%;background:#30363e"></div>
<div style="position:absolute;left:87.2px;top:1257.6px;width:52.8px;height:52.8px;border-radius:13px;box-sizing:border-box;border:3px solid #cfd4da;background:#fff"></div>
<div class="t" style="left:172.2px;top:1267.5px;font-size:34.78px;color:#0b6fe0;letter-spacing:-2.07px;">192.168.56.0</div>
<div class="t" style="left:429.8px;top:1267.5px;font-size:34.78px;color:#2e343c;letter-spacing:-1.25px;">24</div>
<div style="position:absolute;left:1438px;top:1262.6px;width:156px;height:38px;border-radius:13px;background:#dde1e6"></div>
<div class="t" style="left:1624.3px;top:1267.5px;font-size:34.78px;color:#2e343c;letter-spacing:0.29px;">0.00%</div>
<div class="t" style="left:1797.5px;top:1267.3px;font-size:35.07px;color:#2e343c;letter-spacing:-0.63px;">Production</div>
<div class="t" style="left:2290.5px;top:1267.5px;font-size:34.78px;color:#0b6fe0;letter-spacing:-1.60px;">Show</div>
<div class="t" style="left:2691.2px;top:1267.5px;font-size:34.78px;color:#2e343c;letter-spacing:-2.79px;">192.168.56.1</div>
<div style="position:absolute;left:2990px;top:1256.6px;width:17px;height:50px;overflow:hidden"><div class="t" style="left:1.8px;top:11.6px;font-size:34.06px;color:#2e343c;">1</div></div>
<div style="position:absolute;left:3051.3px;top:1267.0px;width:6.8px;height:6.8px;border-radius:50%;background:#30363e"></div>
<div style="position:absolute;left:3051.3px;top:1280.4px;width:6.8px;height:6.8px;border-radius:50%;background:#30363e"></div>
<div style="position:absolute;left:3051.3px;top:1293.8px;width:6.8px;height:6.8px;border-radius:50%;background:#30363e"></div>
<div style="position:absolute;left:87.2px;top:1370.0px;width:52.8px;height:52.8px;border-radius:13px;box-sizing:border-box;border:3px solid #cfd4da;background:#fff"></div>
<div class="t" style="left:171.8px;top:1379.9px;font-size:34.78px;color:#0b6fe0;letter-spacing:-3.88px;">::1</div>
<div class="t" style="left:428.8px;top:1379.9px;font-size:34.78px;color:#2e343c;letter-spacing:-3.62px;">128</div>
<div class="t" style="left:1436.0px;top:1379.9px;font-size:34.78px;color:#2e343c;letter-spacing:-1.36px;">NA IPv6</div>
<div class="t" style="left:1797.5px;top:1379.7px;font-size:35.07px;color:#2e343c;letter-spacing:-0.63px;">Production</div>
<div class="t" style="left:2290.5px;top:1379.9px;font-size:34.78px;color:#0b6fe0;letter-spacing:-1.60px;">Show</div>
<div class="t" style="left:2690.8px;top:1379.9px;font-size:34.78px;color:#2e343c;letter-spacing:-3.12px;">::1</div>
<div style="position:absolute;left:2990px;top:1369.0px;width:17px;height:50px;overflow:hidden"><div class="t" style="left:1.3px;top:11.6px;font-size:34.06px;color:#2e343c;">::</div></div>
<div style="position:absolute;left:3051.3px;top:1379.4px;width:6.8px;height:6.8px;border-radius:50%;background:#30363e"></div>
<div style="position:absolute;left:3051.3px;top:1392.8px;width:6.8px;height:6.8px;border-radius:50%;background:#30363e"></div>
<div style="position:absolute;left:3051.3px;top:1406.2px;width:6.8px;height:6.8px;border-radius:50%;background:#30363e"></div>
<div class="t" style="left:2850.8px;top:1497.7px;font-size:35.65px;color:#6b7580;letter-spacing:0.56px;">Total</div>
<div class="t" style="left:2937.0px;top:1497.7px;font-size:35.65px;color:#6b7580;font-weight:700;">7</div>
<div class="t" style="left:2966.9px;top:1497.7px;font-size:35.65px;color:#6b7580;letter-spacing:-0.07px;">Subnets</div>
<div style="position:absolute;left:679px;top:530.5px;width:766px;height:482px;box-sizing:border-box;border:1.6px solid #c9cfd6;border-radius:14px;background:#fff;box-shadow:0 8px 26px rgba(20,30,45,0.10)"></div>
<div class="t" style="left:721.2px;top:559.9px;font-size:35.94px;color:#424a54;letter-spacing:0.08px;">Delete with Detailed Confirmation</div>
<div class="t" style="left:721.2px;top:651.1px;font-size:35.94px;color:#424a54;letter-spacing:-0.25px;">Fast Background Delete</div>
<div class="t" style="left:722.5px;top:742.0px;font-size:35.94px;color:#424a54;letter-spacing:-0.39px;">Change Customer</div>
<div style="position:absolute;left:675.8px;top:801.4px;width:771.8px;height:140.1px;box-sizing:border-box;border:5.6px solid #f3323f;border-radius:2px;background:#e8ebef;box-shadow:0 3px 6px rgba(0,0,0,0.08)"></div>
<div class="t" style="left:722.5px;top:834.3px;font-size:35.94px;color:#424a54;letter-spacing:-0.16px;">Create a Ping Sweep Job for selected</div>
<div class="t" style="left:723.2px;top:874.1px;font-size:35.94px;color:#424a54;letter-spacing:-0.06px;">subnets</div>
<div class="t" style="left:721.2px;top:965.7px;font-size:35.94px;color:#424a54;letter-spacing:0.10px;">Export selected items</div>
</div></body></html>
